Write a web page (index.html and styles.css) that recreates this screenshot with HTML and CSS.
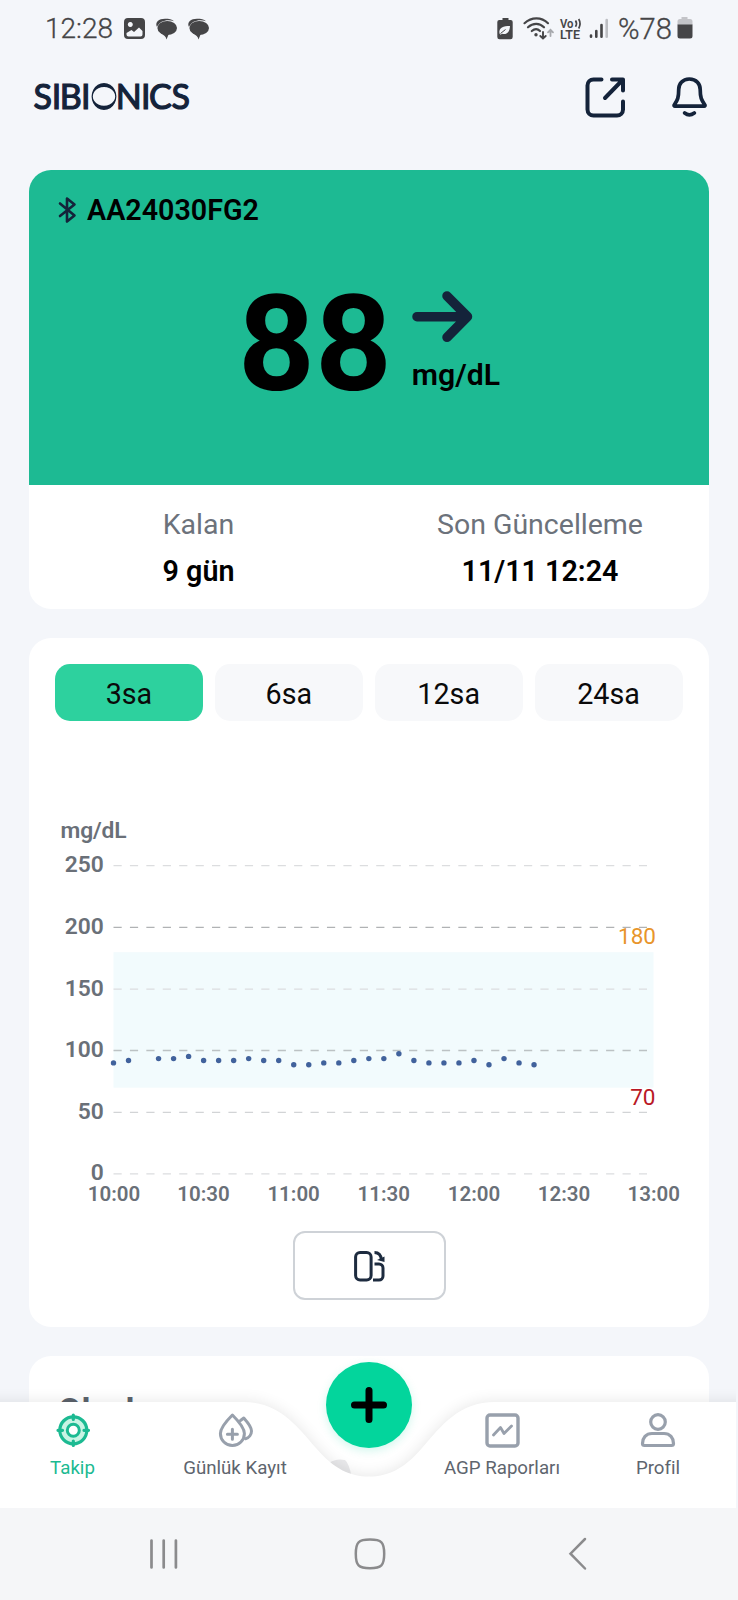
FILE: index.html
```html
<!DOCTYPE html>
<html lang="tr">
<head>
<meta charset="utf-8">
<title>SIBIONICS</title>
<link rel="stylesheet" href="styles.css">
</head>
<body>
<div class="phone">
  <div class="status">
    <span class="clock">12:28</span>
    <svg class="status-left" width="88" height="24" viewBox="122 16 88 24">
      <path fill="#454547" fill-rule="evenodd" d="M128 18h13a4 4 0 0 1 4 4v13a4 4 0 0 1-4 4h-13a4 4 0 0 1-4-4V22a4 4 0 0 1 4-4zm2.300 4a2.500 2.500 0 1 0 0.010 0zM126.500 33v1.500a2 2 0 0 0 2 2h12a2 2 0 0 0 2-2v-3.500l-3.500-3.500-5 4.500-2.500-2z"/>
      <g id="chat" fill="#454547">
        <ellipse cx="167.200" cy="28" rx="9.800" ry="7"/>
        <path d="M160 31h10l-3.500 8.500c-.5-3-2.500-4.500-5.500-6z"/>
        <path d="M157 27c-2.500-5 2-8.300 8-8.300 4 0 7 .5 9 2.500-7-2-14-.5-17 5.800z"/>
      </g>
      <use href="#chat" x="32"/>
    </svg>
    <svg class="status-right" width="112" height="26" viewBox="496 15 112 26">
      <path fill="#454547" d="M502.500 18h6v2h2.200a2 2 0 0 1 2 2v15a2.200 2.200 0 0 1-2.200 2.200H499.500a2.200 2.200 0 0 1-2.200-2.200V22a2 2 0 0 1 2-2h3.200z"/>
      <path fill="#f4f6fa" d="M499.500 33.500c-1-6 4-7.500 10.500-7.500-.3 6-3 9-8 7.800l-1.500 1z"/>
      <path fill="none" stroke="#454547" stroke-width="1" d="M500.500 33.500l5-4"/>
      <g fill="none" stroke="#454547" stroke-width="2.200" stroke-linecap="round">
        <path d="M524.500 23.200c7-6.500 17-6.500 23.500 0M528 27.300c5-4.600 11.500-4.600 16 0M531.800 31c2.800-2.400 5.800-2.400 8.200 0"/>
        <path d="M543 32v6.200M540.300 36l2.700 2.500 2.700-2.500" stroke-width="1.900"/>
        <path d="M550.500 36v-6M548 32.300l2.500-2.500 2.500 2.500" stroke="#a7a9ad" stroke-width="1.800"/>
      </g>
      <circle cx="536" cy="34.700" r="1.700" fill="#454547"/>
      <text class="volte" x="560" y="27.600" textLength="13.500" lengthAdjust="spacingAndGlyphs">Vo</text>
      <path fill="none" stroke="#454547" stroke-width="1.700" d="M575.500 20.500q2 3 0 6.300M578.700 19q2.600 4.500 0 9.500"/>
      <text class="volte" x="560" y="39.300" textLength="20" lengthAdjust="spacingAndGlyphs">LTE</text>
      <g stroke-width="2.600" stroke-linecap="round" stroke="#454547">
        <path d="M591 35.500v1.200M596.300 31v5.700M601.500 25v11.700"/>
        <path d="M606.700 20v16.700" stroke="#bdbfc3"/>
      </g>
    </svg>
    <span class="percent">%78</span>
    <svg class="battery" width="16" height="22" viewBox="0 0 16 22">
      <path fill="#c3c4c8" d="M4.500 0h6v2h2.500a2.500 2.500 0 0 1 2.500 2.500V8H.5V4.500A2.500 2.500 0 0 1 3 2h1.500z"/>
      <path fill="#454547" d="M.5 7.500h15V19a2.500 2.500 0 0 1-2.500 2.500H3A2.500 2.500 0 0 1 .5 19z"/>
    </svg>
  </div>

  <header class="header">
    <svg class="logo" width="160" height="34" viewBox="32 80 160 34">
      <text class="logo-text" y="108.800" x="33.500 51.800 59.700 81 90 115.700 141 149 171.500">SIBI<tspan class="logo-o">O</tspan>NICS</text>
      <path fill="#14233a" fill-rule="evenodd" d="M104 83a12.400 13.500 0 1 1-.01 0zM104 87a11.200 9.400 0 1 0 .01 0z"/>
    </svg>
    <div class="actions">
      <svg width="42" height="42" viewBox="584 76 42 42" fill="none" stroke="#14233a" stroke-width="4" stroke-linecap="round" stroke-linejoin="round">
        <path d="M601.500 79.500H593.500a6 6 0 0 0-6 6V109.500a6 6 0 0 0 6 6H617a6 6 0 0 0 6-6V101.500M612 79.500h11v11M622.500 80L605 98"/>
      </svg>
      <svg width="38" height="42" viewBox="670 76 38 42" fill="none" stroke="#14233a" stroke-width="3.700" stroke-linecap="round" stroke-linejoin="round">
        <path d="M689.300 79c-7 0-10.600 5-10.600 10.500 0 8-1 10.500-4.500 15.500a.8.800 0 0 0 .7 1.200h29.300a.8.800 0 0 0 .7-1.200c-3.500-5-4.700-7.500-4.700-15.500C700.200 84 696.500 79 689.300 79zM684.700 113q4.600 3.600 9.600 0"/>
      </svg>
    </div>
  </header>

  <main class="content">
    <section class="card glucose">
      <div class="reading">
        <div class="device">
          <svg width="20" height="28" viewBox="0 0 20 28" fill="none" stroke="#14233a" stroke-width="2.600" stroke-linejoin="round" stroke-linecap="round">
            <path d="M3 7.500l14.500 12-7.500 6V2.500l7.500 6L3 20"/>
          </svg>
          <span class="device-id">AA24030FG2</span>
        </div>
        <div class="value-row">
          <span class="value">88</span>
          <div class="trend">
            <svg width="62" height="54" viewBox="411 290 62 54" fill="none" stroke="#14233a" stroke-width="9.500" stroke-linecap="round" stroke-linejoin="round">
              <path d="M417 316.700h50M447 296l20.500 20.700L447 337.300"/>
            </svg>
            <span class="unit">mg/dL</span>
          </div>
        </div>
      </div>
      <dl class="meta">
        <div class="meta-item"><dt>Kalan</dt><dd>9 gün</dd></div>
        <div class="meta-item"><dt>Son Güncelleme</dt><dd>11/11 12:24</dd></div>
      </dl>
    </section>

    <section class="card trends">
      <div class="ranges">
        <button class="range active">3sa</button>
        <button class="range">6sa</button>
        <button class="range">12sa</button>
        <button class="range">24sa</button>
      </div>
      <svg class="chart" width="680" height="410" viewBox="29 810 680 410">
        <rect x="113.500" y="952.200" width="540" height="135.500" fill="#f2fbfd"/>
        <g fill="none" stroke-width="1.300" stroke-dasharray="8.200 8.220">
          <path stroke="#dcdddf" d="M113.500 865.700H647M113.500 989.200H647M113.500 1173.800H647"/>
          <path stroke="#d2d4d6" d="M113.500 1112.400H647"/>
          <path stroke="#b0b2b4" d="M113.500 927.400H647"/>
          <path stroke="#bcc2c4" d="M113.500 1050.500H647"/>
        </g>
        <text class="axis" x="60.500" y="838.300" textLength="66">mg/dL</text>
        <g class="axis" text-anchor="end">
          <text x="103.800" y="872.300">250</text>
          <text x="103.800" y="934">200</text>
          <text x="103.800" y="995.500">150</text>
          <text x="103.800" y="1057">100</text>
          <text x="103.800" y="1118.500">50</text>
          <text x="103.800" y="1180">0</text>
        </g>
        <g class="axis hours" text-anchor="middle">
          <text x="114" y="1201.300">10:00</text>
          <text x="203.500" y="1201.300">10:30</text>
          <text x="293.600" y="1201.300">11:00</text>
          <text x="383.700" y="1201.300">11:30</text>
          <text x="474" y="1201.300">12:00</text>
          <text x="564" y="1201.300">12:30</text>
          <text x="653.700" y="1201.300">13:00</text>
        </g>
        <text class="limit high" x="656" y="944" text-anchor="end">180</text>
        <text class="limit low" x="655.500" y="1105" text-anchor="end">70</text>
        <g id="dots" fill="#41629c"></g>
      </svg>
      <button class="rotate">
        <svg width="32" height="32" viewBox="353 1250 32 32" fill="none" stroke="#1d2b3f" stroke-width="3">
          <rect x="355.600" y="1252.500" width="15.500" height="27.500" rx="4.500"/>
          <path d="M374.500 1252.500c4 0 6.500 2 7 7.500M374.500 1264h4.500a4 4 0 0 1 4 4v8a4 4 0 0 1-4 4h-6"/>
          <path fill="#1d2b3f" stroke="none" d="M377 1260l7.500-3.500v5.500z"/>
        </svg>
      </button>
    </section>

    <section class="card events">
      <h2>Olaylar</h2>
      <svg class="illustration" width="24" height="20" viewBox="0 0 24 20"><path fill="#e9e9eb" d="M0 5Q7 0 16 2Q20 5 23 20H0z"/></svg>
    </section>
  </main>

  <nav class="tabbar">
    <svg class="tabbar-shape" width="736" height="136" viewBox="0 1372 736 136">
      <defs><filter id="soft" x="-5%" y="-40%" width="110%" height="180%"><feGaussianBlur stdDeviation="8"/></filter></defs>
      <path fill="#000" opacity=".1" filter="url(#soft)" d="M-20 1402H243C279 1402 296 1425 316 1448C334 1469 350 1476.500 369 1476.500S404 1469 422 1448C442 1425 459 1402 495 1402H760V1508H-20z"/>
      <path fill="#fff" d="M0 1402H243C279 1402 296 1425 316 1448C334 1469 350 1476.500 369 1476.500S404 1469 422 1448C442 1425 459 1402 495 1402H736V1508H0z"/>
    </svg>
    <div class="tabs">
      <a class="tab tab-home">
        <svg width="36" height="36" viewBox="54 1412 36 36" fill="none" stroke="#1cba92" stroke-width="3.200" stroke-linecap="round">
          <circle cx="72.300" cy="1430.300" r="13.500" fill="#c8f4e4"/>
          <circle cx="72.300" cy="1430.300" r="6" fill="#fff" stroke-width="3"/>
          <path d="M72.300 1415v4.500M72.300 1441v4.500M57 1430.300h4.500M83 1430.300h4.500"/>
        </svg>
        <span>Takip</span>
      </a>
      <a class="tab tab-log">
        <svg width="36" height="36" viewBox="216 1412 36 36" fill="none" stroke="#98a0ac" stroke-width="3" stroke-linecap="round" stroke-linejoin="round">
          <path d="M231.400 1415c5.500 5.500 12 12.500 12 18.500a12 12 0 0 1-24 0c0-6 6.500-13 12-18.500zM231.400 1429.300v10M226.400 1434.300h10"/>
          <path d="M239.500 1420.500l3.300-2.500c4 4.500 7.700 8.500 7.700 13 0 3.500-2.500 6.800-6 7.800"/>
        </svg>
        <span>Günlük Kayıt</span>
      </a>
      <a class="tab tab-agp">
        <svg width="36" height="36" viewBox="484 1412 36 36" fill="none" stroke="#98a0ac" stroke-width="3.400" stroke-linecap="round" stroke-linejoin="round">
          <rect x="487" y="1415" width="31" height="31" rx="3"/>
          <path d="M493.500 1435l7-7.500 3.500 6 7.500-7.500" stroke-width="2.800"/>
        </svg>
        <span>AGP Raporları</span>
      </a>
      <a class="tab tab-profile">
        <svg width="36" height="36" viewBox="640 1412 36 36" fill="none" stroke="#98a0ac" stroke-width="3.200" stroke-linejoin="round">
          <circle cx="658" cy="1422" r="7.300"/>
          <path d="M652 1433.500h12c6 0 9.500 4.500 9.500 10 0 1.200-.8 2-2 2h-27c-1.200 0-2-.8-2-2 0-5.500 3.500-10 9.500-10z"/>
        </svg>
        <span>Profil</span>
      </a>
    </div>
    <button class="fab" aria-label="Ekle">
      <svg width="38" height="38" viewBox="0 0 38 38" stroke="#000" stroke-width="7" stroke-linecap="round"><path d="M19 4.500v29M4.500 19h29"/></svg>
    </button>
  </nav>

  <footer class="sysnav">
    <svg width="30" height="32" viewBox="0 0 30 32" stroke="#8b8b8d" stroke-width="2.700" stroke-linecap="round"><path d="M2.500 2.500v27M14.700 2.500v27M26.900 2.500v27"/></svg>
    <svg width="34" height="34" viewBox="0 0 34 34" fill="none" stroke="#8b8b8d" stroke-width="2.500"><path d="M17 2.500c11.500 0 14.200 2.700 14.200 14.300S28.500 31.200 17 31.200 2.800 28.500 2.800 16.800 5.500 2.500 17 2.500z"/></svg>
    <svg width="20" height="34" viewBox="0 0 20 34" fill="none" stroke="#8b8b8d" stroke-width="2.500" stroke-linecap="round"><path d="M17 2L2.500 16.700 17 31.500"/></svg>
  </footer>
</div>
<script src="chart.js"></script>
</body>
</html>
```
FILE: chart.js
```js
// One reading every five minutes from 10:00; null marks a missed reading.
const readings = [90, 92, null, 93.5, 93.5, 95.3, 92, 92, 92, 93.5, 92, 92, 88.5, 88.5, 90,
  90, 92, 93.5, 93.5, 97.5, 92, 90, 90, 90, 92, 88.5, 93.5, 90, 88.5];
const dots = document.getElementById("dots");
readings.forEach((v, i) => {
  if (v === null) return;
  const c = document.createElementNS("http://www.w3.org/2000/svg", "circle");
  c.setAttribute("cx", 113.5 + i * 15.02);
  c.setAttribute("cy", 1173.8 - v * 1.232);
  c.setAttribute("r", 2.7);
  dots.appendChild(c);
});
```
FILE: styles.css
```css
* { box-sizing: border-box; }
body { margin: 0; background: #f4f6fa; font-family: Roboto, "Liberation Sans", sans-serif; }
button { border: 0; padding: 0; font: inherit; }
svg { display: block; flex: none; }
dl, dd, h2 { margin: 0; }

.phone { position: relative; display: flex; flex-direction: column; width: 738px; height: 1600px; overflow: hidden; }

.status { display: flex; height: 60px; padding: 0 44px 0 45px; flex: none; color: #454547; }
.clock, .percent { font-size: 28px; font-weight: 300; line-height: 34px; padding-top: 12px; white-space: nowrap; -webkit-text-stroke: .3px #454547; }
.clock { width: 77px; }
.percent { width: 57px; margin-left: 10px; font-size: 29.200px; }
.status-left { margin-top: 16px; }
.status-right { margin: 15px 0 0 286px; }
.battery { margin: 17px 0 0 2px; }
.volte { font: 600 12px Roboto, sans-serif; fill: #454547; }

.header { display: flex; justify-content: space-between; height: 110px; padding: 16px 30px 0 32px; flex: none; }
.logo { margin-top: 4px; overflow: visible; }
.logo-text { font: 400 34px Lato, sans-serif; fill: #14233a; stroke: #14233a; stroke-width: 1.200px; }
.logo-o { fill: transparent; stroke: none; }
.actions { display: flex; gap: 44px; }

.content { display: flex; flex-direction: column; gap: 29px; height: 1338px; padding: 0 29px; overflow: hidden; }
.card { flex: none; background: #fff; border-radius: 22px; overflow: hidden; }

.reading { height: 315px; padding-top: 24px; background: #1dba93; }
.device { display: flex; align-items: center; gap: 10px; height: 32px; padding-left: 28px; }
.device-id { font-size: 28.700px; font-weight: 600; line-height: 32px; }
.value-row { display: flex; gap: 19px; margin-top: 51px; padding-left: 209px; }
.value { font-size: 134px; font-weight: 700; line-height: 136px; }
.trend { display: flex; flex-direction: column; padding-top: 13px; }
.unit { margin-top: 14px; padding-left: 1px; font-size: 30.200px; font-weight: 600; line-height: 34px; }

.meta { display: grid; grid-template-columns: 339px 1fr; column-gap: 3px; height: 124px; padding-top: 23px; }
.meta-item { display: flex; flex-direction: column; gap: 12px; align-items: center; }
.meta dt { font-size: 28.500px; line-height: 34px; color: #6c727b; }
.meta dd { font-size: 28.700px; font-weight: 600; line-height: 34px; }

.trends { display: flex; flex-direction: column; height: 689px; }
.ranges { display: grid; grid-template-columns: repeat(4, 1fr); gap: 12px; height: 57px; margin: 26px 26.500px 0 26px; }
.range { padding-top: 2px; border-radius: 15px; background: #f7f8fa; font-size: 28.700px; color: #0a0a0a; }
.range.active { background: #2dd19e; }
.chart { margin-top: 89px; }
.axis { font-size: 22.800px; font-weight: 600; fill: #6a7078; }
.hours { font-size: 20.500px; }
.limit { font-size: 22.500px; }
.high { fill: #e8952b; }
.low { fill: #b91825; }
.rotate { display: flex; align-items: center; justify-content: center; width: 153px; height: 69px; margin: 11px auto 0; background: #fff; border: 2px solid #ced2d7; border-radius: 12px; }

.events { height: 300px; padding: 34px 0 0 29px; }
.events h2 { font-size: 34px; font-weight: 700; line-height: 40px; color: #5c636c; }
.illustration { margin: 28px 0 0 271px; }

.tabbar { position: absolute; left: 0; right: 0; top: 1372px; height: 136px; }
.tabbar-shape { position: absolute; inset: 0 auto auto 0; }
.tabs { position: relative; display: flex; padding-top: 40px; }
.tab { display: flex; flex-direction: column; align-items: center; gap: 8px; font-size: 18.700px; line-height: 24px; color: #5e656e; white-space: nowrap; }
.tab-home { width: 145px; color: #1cba92; }
.tab-log { width: 180px; }
.tab-agp { width: 146px; margin-left: 104px; }
.tab-profile { width: 146px; margin-left: 10px; }
.fab { position: absolute; left: 326px; top: -10px; display: flex; align-items: center; justify-content: center; width: 86px; height: 86px; border-radius: 50%; background: #03d59c; box-shadow: 0 3px 10px rgba(3, 213, 156, .18); }

.sysnav { position: relative; height: 92px; flex: none; display: flex; align-items: center; padding-left: 149px; background: #f5f6f8; }
.sysnav svg + svg { margin-left: 174px; }
.sysnav svg + svg + svg { margin-left: 181px; }
```
